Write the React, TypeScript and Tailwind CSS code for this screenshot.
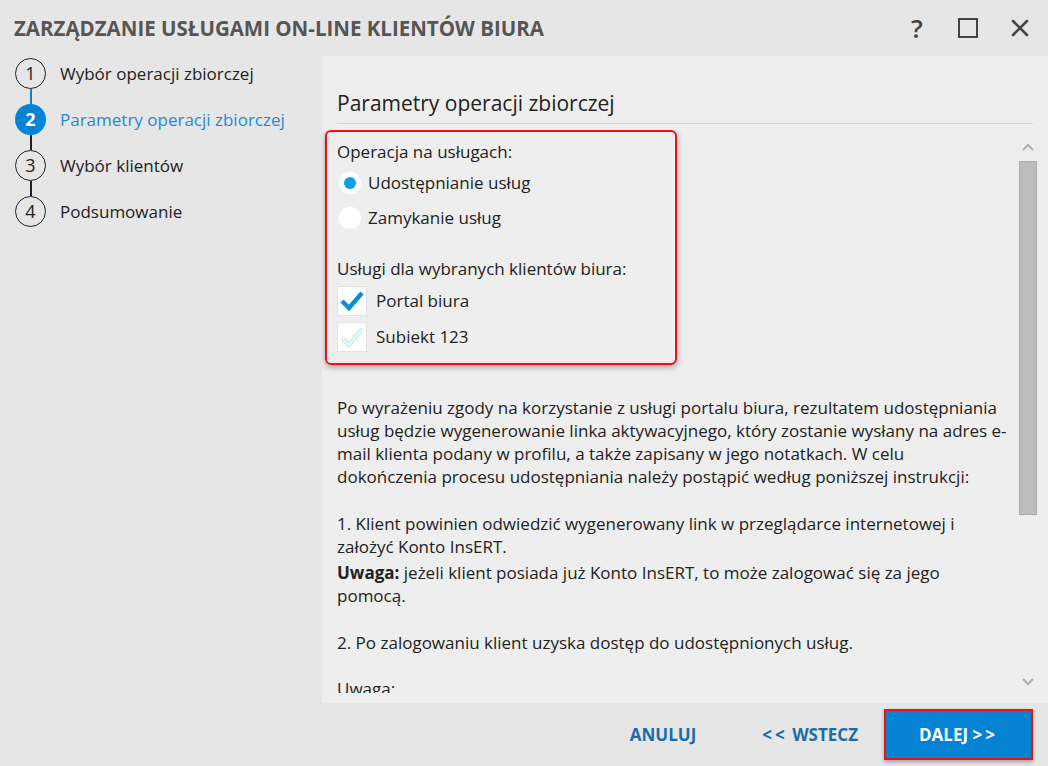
import { X } from 'lucide-react';

const font = { fontFamily: '"Open Sans", "Noto Sans", sans-serif' };

const steps = [
  { n: 1, label: 'Wybór operacji zbiorczej', active: false },
  { n: 2, label: 'Parametry operacji zbiorczej', active: true },
  { n: 3, label: 'Wybór klientów', active: false },
  { n: 4, label: 'Podsumowanie', active: false },
];

function Check({ faded }: { faded?: boolean }) {
  return (
    <div className="w-[30px] h-[30px] bg-white border border-[#e2e2e2] flex items-center justify-center">
      {faded ? (
        <svg width="24" height="22" viewBox="0 0 24 22">
          <path d="M2 12 L9 19 L22 3" fill="none" stroke="#bfe3f6" strokeWidth="4" />
          <path d="M2 12 L9 19 L22 3" fill="none" stroke="#ffffff" strokeWidth="1.5" />
        </svg>
      ) : (
        <svg width="24" height="22" viewBox="0 0 24 22">
          <path d="M2 11 L9 18 L22 3" fill="none" stroke="#0a8fd4" strokeWidth="4.5" />
        </svg>
      )}
    </div>
  );
}

export default function App() {
  return (
    <div className="w-[1048px] h-[766px] bg-[#e6e6e6] flex flex-col overflow-hidden text-[#222]" style={font}>
      {/* title bar */}
      <div className="h-[56px] flex items-center pl-[14px] pr-[14px] shrink-0">
        <h1 className="text-[20.5px] font-bold text-[#555] flex-1">
          ZARZĄDZANIE USŁUGAMI ON-LINE KLIENTÓW BIURA
        </h1>
        <div className="flex items-center gap-[24px] text-[#444]">
          <span className="text-[26px] font-semibold leading-none w-[26px] text-center">?</span>
          <div className="w-[20px] h-[20px] border-[2.5px] border-[#444] mx-[4px]" />
          <X className="w-[28px] h-[28px]" strokeWidth={2.2} />
        </div>
      </div>

      <div className="flex flex-1 min-h-0">
        {/* steps */}
        <div className="w-[322px] shrink-0 pl-[15px] pt-[2px]">
          {steps.map((s, i) => (
            <div key={s.n} className="flex items-start">
              <div className="flex flex-col items-center w-[31px]">
                <div
                  className={`w-[31px] h-[31px] rounded-full flex items-center justify-center text-[18px] ${
                    s.active
                      ? 'bg-[#0584d5] text-white font-bold'
                      : 'border-[1.5px] border-[#222] text-[#222]'
                  }`}
                >
                  {s.n}
                </div>
                {i < steps.length - 1 && (
                  <div className={`w-[2px] h-[15px] ${i === 0 ? 'bg-[#0584d5]' : 'bg-[#222]'}`} />
                )}
              </div>
              <span
                className={`ml-[14px] text-[17px] leading-[31px] ${
                  s.active ? 'text-[#1e8ad6]' : 'text-[#222]'
                }`}
              >
                {s.label}
              </span>
            </div>
          ))}
        </div>

        {/* content */}
        <div className="flex-1 bg-[#eeeeee] flex flex-col min-h-0">
          <div className="mx-[15px] mt-[32px] pb-[5px] border-b border-[#d6d6d6] text-[21px] leading-[30px] text-[#222]">
            Parametry operacji zbiorczej
          </div>
          <div className="flex flex-1 min-h-0 mt-[6px] mb-[10px]">
            <div className="flex-1 overflow-hidden pl-[3px] pr-[10px]">
              <div className="w-[352px] border-2 border-[#ee1111] rounded-[6px] shadow-[0_2px_6px_rgba(0,0,0,0.35)] pl-[10px] pt-[8px] pb-[11px] text-[17px]">
                <div className="leading-[23px]">Operacja na usługach:</div>
                <div className="flex items-center h-[24px] mt-[8px]">
                  <div className="w-[22px] h-[22px] rounded-full bg-white flex items-center justify-center ml-[2px]">
                    <div className="w-[12px] h-[12px] rounded-full bg-[#0ea0de]" />
                  </div>
                  <span className="ml-[7px]">Udostępnianie usług</span>
                </div>
                <div className="flex items-center h-[24px] mt-[11px]">
                  <div className="w-[22px] h-[22px] rounded-full bg-white ml-[2px]" />
                  <span className="ml-[7px]">Zamykanie usług</span>
                </div>
                <div className="leading-[23px] mt-[27px]">Usługi dla wybranych klientów biura:</div>
                <div className="flex items-center mt-[6px]">
                  <Check />
                  <span className="ml-[9px]">Portal biura</span>
                </div>
                <div className="flex items-center mt-[6px]">
                  <Check faded />
                  <span className="ml-[9px]">Subiekt 123</span>
                </div>
              </div>

              <div className="pl-[12px] pr-[2px] mt-[31px] text-[17px] leading-[23px] text-[#222] whitespace-nowrap">
                <p>
                  Po wyrażeniu zgody na korzystanie z usługi portalu biura, rezultatem udostępniania
                  <br />
                  usług będzie wygenerowanie linka aktywacyjnego, który zostanie wysłany na adres e-
                  <br />
                  mail klienta podany w profilu, a także zapisany w jego notatkach. W celu
                  <br />
                  dokończenia procesu udostępniania należy postąpić według poniższej instrukcji:
                </p>
                <p className="mt-[24px]">
                  1. Klient powinien odwiedzić wygenerowany link w przeglądarce internetowej i
                  <br />
                  założyć Konto InsERT.
                </p>
                <p className="mt-[3px]">
                  <b>Uwaga:</b> jeżeli klient posiada już Konto InsERT, to może zalogować się za jego
                  <br />
                  pomocą.
                </p>
                <p className="mt-[24px]">2. Po zalogowaniu klient uzyska dostęp do udostępnionych usług.</p>
                <p className="mt-[23px]">Uwaga:</p>
              </div>
            </div>

            {/* scrollbar */}
            <div className="w-[29px] shrink-0 flex flex-col items-center pr-[11px] pt-[12px] pb-[6px]">
              <svg width="14" height="10" viewBox="0 0 14 10">
                <path d="M2 8 L7 3 L12 8" fill="none" stroke="#b0b0b0" strokeWidth="2" />
              </svg>
              <div className="w-[18px] h-[354px] mt-[9px] bg-[#bdbdbd] border border-[#acacac]" />
              <div className="flex-1" />
              <svg width="14" height="10" viewBox="0 0 14 10">
                <path d="M2 2 L7 7 L12 2" fill="none" stroke="#b0b0b0" strokeWidth="2" />
              </svg>
            </div>
          </div>
        </div>
      </div>

      {/* footer */}
      <div className="h-[63px] shrink-0 flex items-center justify-end pr-[15px]">
        <button className="text-[17px] font-bold text-[#1a6da8] mr-[66px]">ANULUJ</button>
        <button className="text-[17px] font-bold text-[#1a6da8] mr-[26px]">
          <span className="tracking-[3px]">&lt;&lt;</span> WSTECZ
        </button>
        <button className="w-[149px] h-[51px] bg-[#0582d2] border-2 border-[#ee1111] text-white text-[17px] font-bold shadow-[0_2px_4px_rgba(0,0,0,0.3)]">
          DALEJ <span className="tracking-[3px]">&gt;&gt;</span>
        </button>
      </div>
    </div>
  );
}
